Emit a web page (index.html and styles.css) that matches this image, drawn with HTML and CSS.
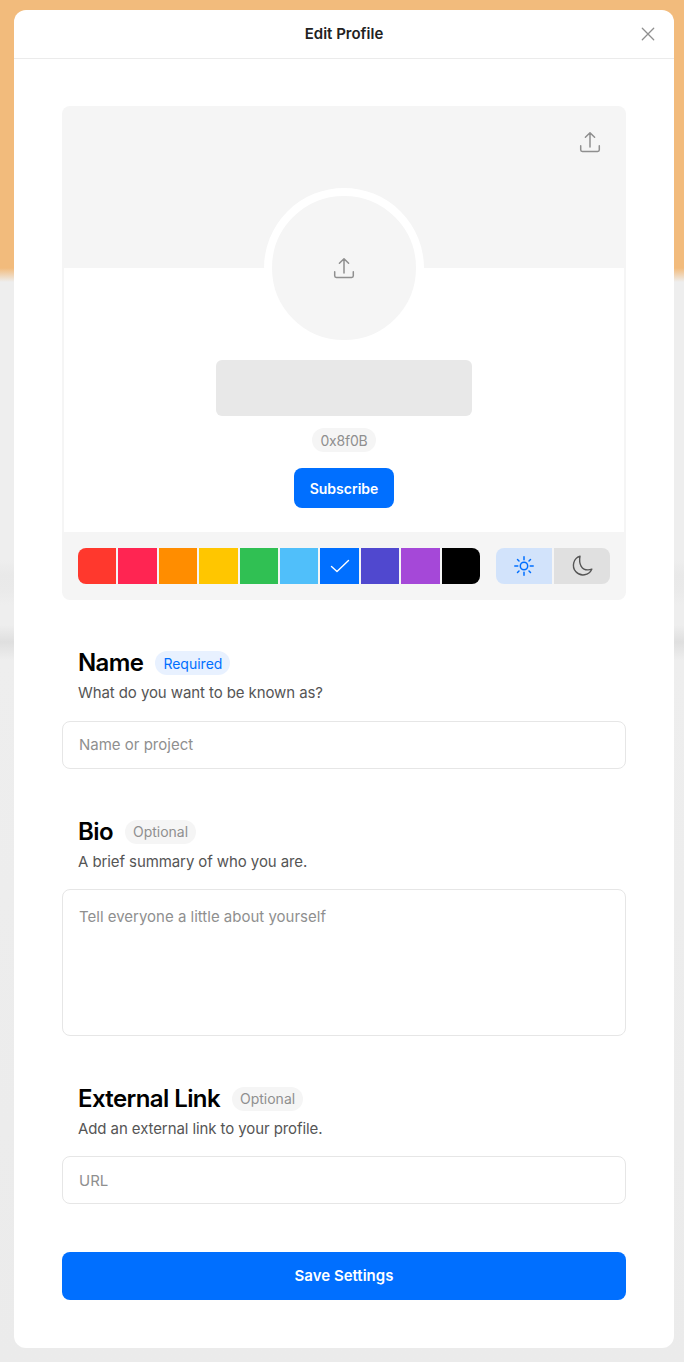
FILE: index.html
```html
<!DOCTYPE html>
<html lang="en">
<head>
<meta charset="utf-8">
<title>Edit Profile</title>
<link rel="stylesheet" href="styles.css">
</head>
<body>
<svg class="sprite" width="0" height="0" aria-hidden="true">
  <symbol id="upload" viewBox="0 0 24 24">
    <path d="M12 17V2.700M7.400 7.300 12 2.700l4.600 4.600M2.700 15.800v4c0 .9.700 1.600 1.600 1.600h15.400c.9 0 1.600-.7 1.600-1.600v-4" fill="none" stroke="currentColor" stroke-width="1.500" stroke-linecap="round" stroke-linejoin="round"/>
  </symbol>
</svg>
<main class="modal">
  <header class="modal-head">
    <h1 class="modal-title">Edit Profile</h1>
    <button class="close" aria-label="Close">
      <svg viewBox="0 0 14 14" width="14" height="14"><path d="M1.300 1.300l11.400 11.400M12.700 1.300 1.300 12.700" fill="none" stroke="currentColor" stroke-width="1.300" stroke-linecap="round"/></svg>
    </button>
  </header>
  <div class="modal-body">
    <section class="card">
      <div class="banner">
        <svg class="icon banner-upload"><use href="#upload"/></svg>
      </div>
      <div class="card-main">
        <div class="avatar"><svg class="icon"><use href="#upload"/></svg></div>
        <div class="name-block"></div>
        <span class="address">0x8f0B</span>
        <button class="subscribe">Subscribe</button>
      </div>
      <div class="toolbar">
        <div class="swatches">
          <span class="swatch red"></span>
          <span class="swatch pink"></span>
          <span class="swatch orange"></span>
          <span class="swatch yellow"></span>
          <span class="swatch green"></span>
          <span class="swatch sky"></span>
          <span class="swatch blue">
            <svg viewBox="0 0 20 14" width="20" height="14"><path d="M1.500 7.500 7 12.600 18.500 1.600" fill="none" stroke="#fff" stroke-width="1.400" stroke-linecap="round" stroke-linejoin="round"/></svg>
          </span>
          <span class="swatch indigo"></span>
          <span class="swatch purple"></span>
          <span class="swatch black"></span>
        </div>
        <div class="themes">
          <span class="theme light">
            <svg viewBox="0 0 20 20" width="20" height="20"><g fill="none" stroke="currentColor" stroke-width="1.500" stroke-linecap="round"><circle cx="10" cy="10" r="3.700"/><path d="M10 .8v3M10 16.200v3M.8 10h3M16.200 10h3M3.500 3.500l1.500 1.500M15 15l1.500 1.500M3.500 16.500 5 15M15 5l1.500-1.500"/></g></svg>
          </span>
          <span class="theme dark">
            <svg viewBox="0 0 22 22" width="22" height="22"><path d="M9 1.200a9.600 9.600 0 1 0 11.800 13 10.400 10.400 0 0 1-4 .7C11.200 14.900 7.400 10 9 1.200Z" fill="none" stroke="currentColor" stroke-width="1.400" stroke-linejoin="round"/></svg>
          </span>
        </div>
      </div>
    </section>

    <section class="field field-name">
      <div class="field-head">
        <h2 class="field-title">Name</h2>
        <span class="pill required">Required</span>
      </div>
      <p class="field-desc">What do you want to be known as?</p>
      <input class="input" type="text" placeholder="Name or project">
    </section>

    <section class="field field-bio">
      <div class="field-head">
        <h2 class="field-title">Bio</h2>
        <span class="pill">Optional</span>
      </div>
      <p class="field-desc">A brief summary of who you are.</p>
      <textarea class="input textarea" placeholder="Tell everyone a little about yourself"></textarea>
    </section>

    <section class="field field-link">
      <div class="field-head">
        <h2 class="field-title">External Link</h2>
        <span class="pill">Optional</span>
      </div>
      <p class="field-desc">Add an external link to your profile.</p>
      <input class="input" type="text" placeholder="URL">
    </section>

    <button class="save">Save Settings</button>
  </div>
</main>
</body>
</html>
```
FILE: styles.css
```css
* {
  box-sizing: border-box;
}

html,
body {
  margin: 0;
  height: 1362px;
  overflow: hidden;
}

body {
  padding: 10px 10px 14px 14px;
  font-family: Inter, "Liberation Sans", sans-serif;
  background: linear-gradient(
    180deg,
    #f2bb7c 0,
    #f2bb7c 268px,
    #eeeeee 282px,
    #eeeeee 560px,
    #e9e9e9 575px,
    #eaeaea 590px,
    #eeeeee 605px,
    #eeeeee 625px,
    #dfdfdf 642px,
    #eeeeee 660px,
    #ebebeb 1362px
  );
}

.sprite {
  position: absolute;
}

.modal {
  width: 660px;
  height: 1338px;
  background: #fff;
  border-radius: 12px;
  overflow: hidden;
}

.modal-head {
  position: relative;
  display: flex;
  align-items: center;
  justify-content: center;
  height: 49px;
  border-bottom: 1px solid #ebebeb;
}

.modal-title {
  margin: 0;
  font-size: 15px;
  line-height: 20px;
  font-weight: 600;
  color: #222;
}

.close {
  position: absolute;
  top: 17px;
  right: 19px;
  display: flex;
  width: 14px;
  height: 14px;
  padding: 0;
  border: 0;
  background: none;
  color: #8f8f8f;
}

.modal-body {
  display: flex;
  flex-direction: column;
  padding: 47px 48px 0;
}

.card {
  display: flex;
  flex-direction: column;
  height: 494px;
  background: #f5f5f5;
  border-radius: 8px;
}

.icon {
  width: 24px;
  height: 24px;
  color: #8f8f8f;
}

.banner {
  display: flex;
  justify-content: flex-end;
  height: 162px;
  padding: 24px 24px 0 0;
}

.card-main {
  position: relative;
  display: flex;
  flex-direction: column;
  align-items: center;
  height: 264px;
  margin: 0 2px;
  padding-top: 92px;
  background: #fff;
}

.avatar {
  position: absolute;
  top: -80px;
  left: 200px;
  display: flex;
  align-items: center;
  justify-content: center;
  width: 160px;
  height: 160px;
  background: #f5f5f5;
  border: 8px solid #fff;
  border-radius: 50%;
}

.name-block {
  width: 256px;
  height: 56px;
  background: #e8e8e8;
  border-radius: 6px;
}

.address {
  width: 64px;
  height: 24px;
  margin-top: 12px;
  padding-top: 1px;
  font-size: 14px;
  line-height: 24px;
  letter-spacing: -0.2px;
  text-align: center;
  color: #8f8f8f;
  background: #f5f5f5;
  border-radius: 12px;
}

.subscribe {
  width: 100px;
  height: 40px;
  margin-top: 16px;
  padding: 1px 0 0;
  border: 0;
  border-radius: 8px;
  background: #006fff;
  color: #fff;
  font: 600 14px/20px Inter, "Liberation Sans", sans-serif;
}

.toolbar {
  display: flex;
  justify-content: space-between;
  height: 68px;
  padding: 16px;
}

.swatches {
  display: flex;
  gap: 2px;
  width: 402px;
  height: 36px;
  border-radius: 8px;
  overflow: hidden;
}

.swatch {
  flex: 1;
  display: flex;
  align-items: center;
  justify-content: center;
}

.red { background: #ff382d; }
.pink { background: #ff2552; }
.orange { background: #ff8d00; }
.yellow { background: #ffc600; }
.green { background: #30c053; }
.sky { background: #50bffa; }
.blue { background: #006fff; }
.indigo { background: #5048cf; }
.purple { background: #a548d8; }
.black { background: #000; }

.themes {
  display: flex;
  gap: 2px;
  width: 114px;
  height: 36px;
  border-radius: 8px;
  overflow: hidden;
}

.theme {
  flex: 1;
  display: flex;
  align-items: center;
  justify-content: center;
}

.light {
  background: #d2e3fb;
  color: #006fff;
}

.dark {
  background: #e0e0e0;
  color: #555;
}

.field {
  display: flex;
  flex-direction: column;
  margin-top: 49px;
}

.field-head {
  display: flex;
  align-items: center;
  gap: 12px;
  height: 28px;
  padding-left: 16px;
}

.field-title {
  margin: 0;
  font-size: 24px;
  line-height: 28px;
  font-weight: 600;
  letter-spacing: -0.6px;
  color: #000;
}

.pill {
  height: 24px;
  padding: 0 8px;
  font-size: 14px;
  line-height: 24px;
  color: #8f8f8f;
  background: #f5f5f5;
  border-radius: 12px;
}

.required {
  padding-top: 1px;
  color: #006fff;
  background: #e8f1ff;
}

.field-desc {
  margin: 6px 0 0;
  padding-left: 16px;
  font-size: 15px;
  line-height: 20px;
  letter-spacing: -0.09px;
  color: #555;
}

.input {
  display: block;
  width: 100%;
  height: 48px;
  margin-top: 17px;
  padding: 0 16px;
  border: 1px solid #e6e6e6;
  border-radius: 8px;
  outline: 0;
  background: #fff;
  font: 400 15px/20px Inter, "Liberation Sans", sans-serif;
}

.field-name .input {
  margin-top: 18px;
  padding-bottom: 2px;
}

.input::placeholder {
  color: #8f8f8f;
  opacity: 1;
}

.textarea {
  height: 147px;
  padding: 17px 16px;
  resize: none;
}

.save {
  height: 48px;
  margin-top: 48px;
  padding: 0;
  border: 0;
  border-radius: 8px;
  background: #006fff;
  color: #fff;
  font: 600 15px/20px Inter, "Liberation Sans", sans-serif;
}
```
